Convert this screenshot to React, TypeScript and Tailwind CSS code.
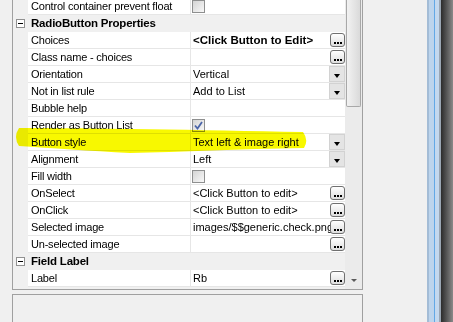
import React from "react";

type Kind = "none" | "check" | "checked" | "ellipsis" | "dropdown";
type Row = { label: string; value?: string; kind?: Kind; bold?: boolean; header?: boolean };

const rows: Row[] = [
  { label: "RadioButton Properties", header: true },
  { label: "Choices", value: "<Click Button to Edit>", bold: true, kind: "ellipsis" },
  { label: "Class name - choices", kind: "ellipsis" },
  { label: "Orientation", value: "Vertical", kind: "dropdown" },
  { label: "Not in list rule", value: "Add to List", kind: "dropdown" },
  { label: "Bubble help" },
  { label: "Render as Button List", kind: "checked" },
  { label: "Button style", value: "Text left & image right", kind: "dropdown" },
  { label: "Alignment", value: "Left", kind: "dropdown" },
  { label: "Fill width", kind: "check" },
  { label: "OnSelect", value: "<Click Button to edit>", kind: "ellipsis" },
  { label: "OnClick", value: "<Click Button to edit>", kind: "ellipsis" },
  { label: "Selected image", value: "images/$$generic.check.png", kind: "ellipsis" },
  { label: "Un-selected image", kind: "ellipsis" },
  { label: "Field Label", header: true },
  { label: "Label", value: "Rb", kind: "ellipsis" },
];

const CheckBox = ({ checked }: { checked?: boolean }) => (
  <div className="mt-[2px] ml-[1px] flex h-[13px] w-[13px] items-center justify-center border border-[#8e8f8f] bg-gradient-to-br from-[#d4d4d4] to-[#f8f8f8]">
    {checked && (
      <svg width="9" height="9" viewBox="0 0 9 9">
        <path d="M1 4.5 L3.5 7.5 L8 1" fill="none" stroke="#4a64a8" strokeWidth="1.8" />
      </svg>
    )}
  </div>
);

const EllipsisButton = () => (
  <div className="absolute right-0 top-[1px] flex h-[14px] w-[15px] items-end justify-center gap-[1px] rounded-[3px] border border-[#707070] bg-gradient-to-b from-white to-[#dedede] pb-[2px]">
    <span className="h-[2px] w-[2px] bg-black" />
    <span className="h-[2px] w-[2px] bg-black" />
    <span className="h-[2px] w-[2px] bg-black" />
  </div>
);

const DropdownButton = () => (
  <div className="absolute right-0 top-0 flex h-[16px] w-[16px] justify-center border border-[#d2d2d2] bg-[#e4e4e4]">
    <div className="mt-[7px] h-0 w-0 border-x-[3.5px] border-t-[4px] border-x-transparent border-t-black" />
  </div>
);

const MinusBox = () => (
  <div className="mt-[4px] ml-[3px] flex h-[9px] w-[9px] items-center justify-center border border-[#919191] bg-white">
    <div className="h-[1px] w-[5px] bg-black" />
  </div>
);

const PropertyRow = ({ row }: { row: Row }) => {
  if (row.header) {
    return (
      <div className="flex h-[17px] bg-[#f0f0f0]">
        <div className="w-[15px] shrink-0">
          <MinusBox />
        </div>
        <div className="pl-[3px] text-[11.5px] font-bold leading-[16px]">{row.label}</div>
      </div>
    );
  }
  return (
    <div className="flex h-[17px]">
      <div className="w-[15px] shrink-0 bg-[#f0f0f0]" />
      <div className="w-[163px] shrink-0 whitespace-nowrap border-b border-r border-[#e6e6e6] bg-white pl-[3px] leading-[16px]">
        {row.label}
      </div>
      <div className="relative w-[154px] shrink-0 overflow-hidden border-b border-[#e6e6e6] bg-white">
        {row.kind === "check" && <CheckBox />}
        {row.kind === "checked" && <CheckBox checked />}
        {row.value && (
          <div
            className={`whitespace-nowrap pl-[2px] leading-[16px] tracking-[0px] ${
              row.bold ? "text-[11.5px] font-bold" : ""
            }`}
          >
            {row.value}
          </div>
        )}
        {row.kind === "ellipsis" && <EllipsisButton />}
        {row.kind === "dropdown" && <DropdownButton />}
      </div>
    </div>
  );
};

const App = () => {
  return (
    <div className="relative flex h-[322px] w-[453px] overflow-hidden bg-[#f0f0f0] font-['Liberation_Sans',Arial,sans-serif] text-[11px] tracking-[-0.2px] text-black">
      <div className="w-[12px] shrink-0" />

      {/* property grid + description pane */}
      <div className="flex w-[351px] shrink-0 flex-col">
        <div className="flex h-[290px] border-x border-b border-[#a0a0a0]">
          <div className="flex w-[332px] shrink-0 flex-col">
            <div className="h-[15px] overflow-hidden">
              <div className="-mt-[2px]">
                <PropertyRow row={{ label: "Control container prevent float", kind: "check" }} />
              </div>
            </div>
            {rows.map((row) => (
              <PropertyRow key={row.label} row={row} />
            ))}
            <div className="flex-1 bg-[#f0f0f0]" />
          </div>

          {/* scrollbar */}
          <div className="flex w-[17px] shrink-0 flex-col bg-[#ebebeb]">
            <div className="mx-[1px] h-[107px] rounded-b-[2px] border-x border-b border-[#a8a8a8] bg-gradient-to-r from-[#f2f2f2] to-[#dadada]" />
            <div className="flex-1" />
            <div className="flex h-[14px] justify-center">
              <div className="mt-[4px] h-0 w-0 border-x-[3px] border-t-[3px] border-x-transparent border-t-[#5a5a5a]" />
            </div>
          </div>
        </div>
        <div className="mt-[4px] flex-1 border-x border-t border-[#a0a0a0]" />
      </div>

      <div className="w-[64px] shrink-0" />

      {/* window frame */}
      <div className="flex w-[26px] shrink-0">
        <div className="w-[2px] bg-[#a3bcd6]" />
        <div className="w-[5px] bg-[#bcd4ec]" />
        <div className="w-[1px] bg-[#62a8e6]" />
        <div className="w-[4px] bg-[#c3d8ee]" />
        <div className="w-[2px] bg-[#9aa6b3]" />
        <div className="w-[12px] bg-gradient-to-r from-[#2c2c2c] to-[#8a8a8a]" />
      </div>

      {/* highlighter stroke */}
      <svg
        className="pointer-events-none absolute left-0 top-0 mix-blend-multiply"
        width="453"
        height="322"
        viewBox="0 0 453 322"
      >
        <path
          d="M19 128 C90 128 200 130 303 132 Q309 140 304 148 C240 149 180 152 130 153 C90 151 50 148 19 146 Q13 137 19 128 Z"
          fill="#f8f800"
        />
      </svg>
    </div>
  );
};

export default App;
